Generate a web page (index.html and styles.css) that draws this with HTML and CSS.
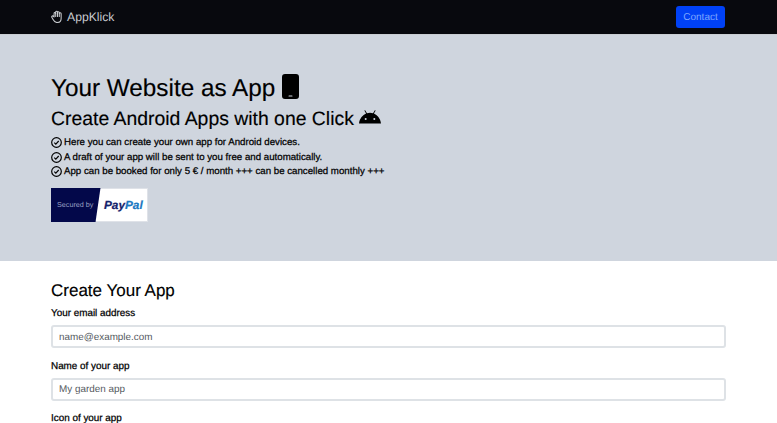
FILE: index.html
```html
<!DOCTYPE html>
<html lang="en">
<head>
<meta charset="utf-8">
<title>AppKlick</title>
<link rel="stylesheet" href="styles.css">
</head>
<body>
<nav class="navbar">
  <a class="brand" href="#">
    <svg class="brand-icon" viewBox="0 0 16 16"><path d="M1.500 9.800c-.8-1-.9-2.100 0-2.500.8-.3 1.500.4 2.300 1.300V4.300c0-1.500 2-1.500 2 0V2.600c0-1.500 2.200-1.500 2.200 0v.4c.1-1.300 2.200-1.300 2.200.2v1.200c.2-1.300 2.300-1.200 2.300.3v5.300c0 3.500-2.400 5.400-5.200 5.400-3 0-3.500-1.700-5.800-5.600z"/><path d="M5.800 4.300V8M8 3v5M10.200 4.400V8"/></svg>
    <span>AppKlick</span>
  </a>
  <a class="btn-contact" href="#">Contact</a>
</nav>
<header class="hero">
  <h1 class="hero-title">Your Website as App
    <svg class="phone-icon" viewBox="0 0 17 25"><path fill-rule="evenodd" d="M3 0h11a3 3 0 0 1 3 3v19a3 3 0 0 1-3 3H3a3 3 0 0 1-3-3V3a3 3 0 0 1 3-3zm4 21.500a.5.5 0 0 0 0 1h3a.5.5 0 0 0 0-1H7z"/></svg>
  </h1>
  <h2 class="hero-sub">Create Android Apps with one Click
    <svg class="android-icon" viewBox="0 0 24 15"><path fill-rule="evenodd" d="M17.300 0l.9.5-1.900 3.300C19.800 5.400 23.300 9 24 14.500H0C.7 9 4.200 5.400 7.700 3.800L5.800.5 6.700 0l2 3.400a11 11 0 0 1 6.600 0zM7.300 8.700a1.100 1.100 0 1 0 0 2.200 1.100 1.100 0 0 0 0-2.200zm9.400 0a1.100 1.100 0 1 0 0 2.200 1.100 1.100 0 0 0 0-2.200z"/></svg>
  </h2>
  <ul class="checks">
    <li><svg class="check" viewBox="0 0 16 16"><circle cx="8" cy="8" r="7"/><path d="M4.800 8.200l2.200 2.200 4.200-4.600"/></svg>Here you can create your own app for Android devices.</li>
    <li><svg class="check" viewBox="0 0 16 16"><circle cx="8" cy="8" r="7"/><path d="M4.800 8.200l2.200 2.200 4.200-4.600"/></svg>A draft of your app will be sent to you free and automatically.</li>
    <li><svg class="check" viewBox="0 0 16 16"><circle cx="8" cy="8" r="7"/><path d="M4.800 8.200l2.200 2.200 4.200-4.600"/></svg>App can be booked for only 5 € / month +++ can be cancelled monthly +++</li>
  </ul>
  <div class="paypal">
    <svg class="paypal-bg" viewBox="0 0 97 34" preserveAspectRatio="none"><polygon points="0,0 50,0 45,34 0,34"/></svg>
    <span class="secured">Secured by</span>
    <span class="pp"><span class="pp-dark">Pay</span><span class="pp-light">Pal</span></span>
  </div>
</header>
<main class="main">
  <h2 class="form-title">Create Your App</h2>
  <form>
    <div class="field">
      <label class="label" for="email">Your email address</label>
      <input class="input" id="email" type="email" placeholder="name@example.com">
    </div>
    <div class="field">
      <label class="label" for="name">Name of your app</label>
      <input class="input" id="name" type="text" placeholder="My garden app">
    </div>
    <div class="field">
      <label class="label">Icon of your app</label>
    </div>
  </form>
</main>
</body>
</html>
```
FILE: styles.css
```css
* { box-sizing: border-box; }
html, body { height: 100%; overflow: hidden; }
body {
  margin: 0;
  background: #fff;
  color: #000;
  font-family: "Liberation Sans", Arial, sans-serif;
  font-size: 10px;
  text-rendering: geometricPrecision;
}
.navbar {
  height: 35px;
  display: flex;
  align-items: center;
  justify-content: space-between;
  padding: 0 52px 1px 51px;
  background: #08090e;
  border-bottom: 1px solid #c9cdd2;
}
.brand {
  display: flex;
  align-items: center;
  gap: 3px;
  color: #c9ccd0;
  font-size: 12.200px;
  text-decoration: none;
}
.brand-icon {
  width: 13px;
  height: 13px;
  fill: none;
  stroke: #c9ccd0;
  stroke-width: 1.300;
  stroke-linejoin: round;
  stroke-linecap: round;
}
.btn-contact {
  width: 49px;
  height: 22px;
  padding-top: 1px;
  display: flex;
  align-items: center;
  justify-content: center;
  border-radius: 3px;
  background: #0041f5;
  color: #7ea6ff;
  font-size: 10px;
  text-decoration: none;
}
.hero {
  height: 226px;
  padding: 39px 51px 0;
  background: #cfd5de;
}
.hero-title {
  margin: 0;
  height: 30px;
  display: flex;
  align-items: center;
  gap: 7px;
  font-size: 24.300px;
  font-weight: 400;
  line-height: 30px;
  -webkit-text-stroke: 0.15px #000;
}
.phone-icon { width: 17px; height: 25px; flex: none; margin-bottom: 6px; }
.hero-sub {
  margin: 2px 0 0;
  height: 27px;
  display: flex;
  align-items: center;
  gap: 5px;
  font-size: 19.400px;
  font-weight: 400;
  line-height: 27px;
  -webkit-text-stroke: 0.15px #000;
}
.android-icon { width: 22px; height: 14px; flex: none; margin-bottom: 5px; }
.checks {
  list-style: none;
  margin: 3px 0 0;
  padding: 0;
  font-size: 9.700px;
  line-height: 14.500px;
  -webkit-text-stroke: 0.25px #000;
}
.checks li { display: flex; align-items: center; gap: 2px; }
.check {
  width: 11px;
  height: 11px;
  flex: none;
  margin-top: -1px;
  fill: none;
  stroke: #000;
  stroke-width: 1.700;
}
.paypal {
  position: relative;
  width: 97px;
  height: 34px;
  margin-top: 8px;
  background: #fff;
  border: 1.500px solid #dfe2e8;
  border-left: 0;
  display: flex;
  align-items: center;
}
.paypal-bg {
  position: absolute;
  left: 0;
  top: -1px;
  width: 100%;
  height: 34px;
  fill: #03084a;
}
.secured {
  position: relative;
  width: 47px;
  margin-left: 6px;
  color: #9aa1c4;
  font-size: 7.200px;
  white-space: nowrap;
}
.pp {
  position: relative;
  font-size: 11.800px;
  font-weight: 700;
  font-style: italic;
  -webkit-text-stroke: 0.2px currentColor;
}
.pp-dark { color: #14226b; }
.pp-light { color: #1a78c2; }
.main { padding: 18px 51px 0; }
.form-title {
  margin: 0 0 5px;
  font-size: 17px;
  font-weight: 400;
  line-height: 23px;
  -webkit-text-stroke: 0.15px #000;
}
.field { margin-bottom: 11.500px; }
.label {
  display: block;
  margin-bottom: 4px;
  font-size: 9.900px;
  line-height: 14px;
  -webkit-text-stroke: 0.25px #000;
}
.input {
  display: block;
  width: 100%;
  height: 23px;
  padding: 1px 6px 0;
  border: 2px solid #dee2e6;
  border-radius: 3px;
  background: #fff;
  font: 9.900px "Liberation Sans", Arial, sans-serif;
  text-rendering: geometricPrecision;
}
.input::placeholder { color: #54595e; opacity: 1; }
```
